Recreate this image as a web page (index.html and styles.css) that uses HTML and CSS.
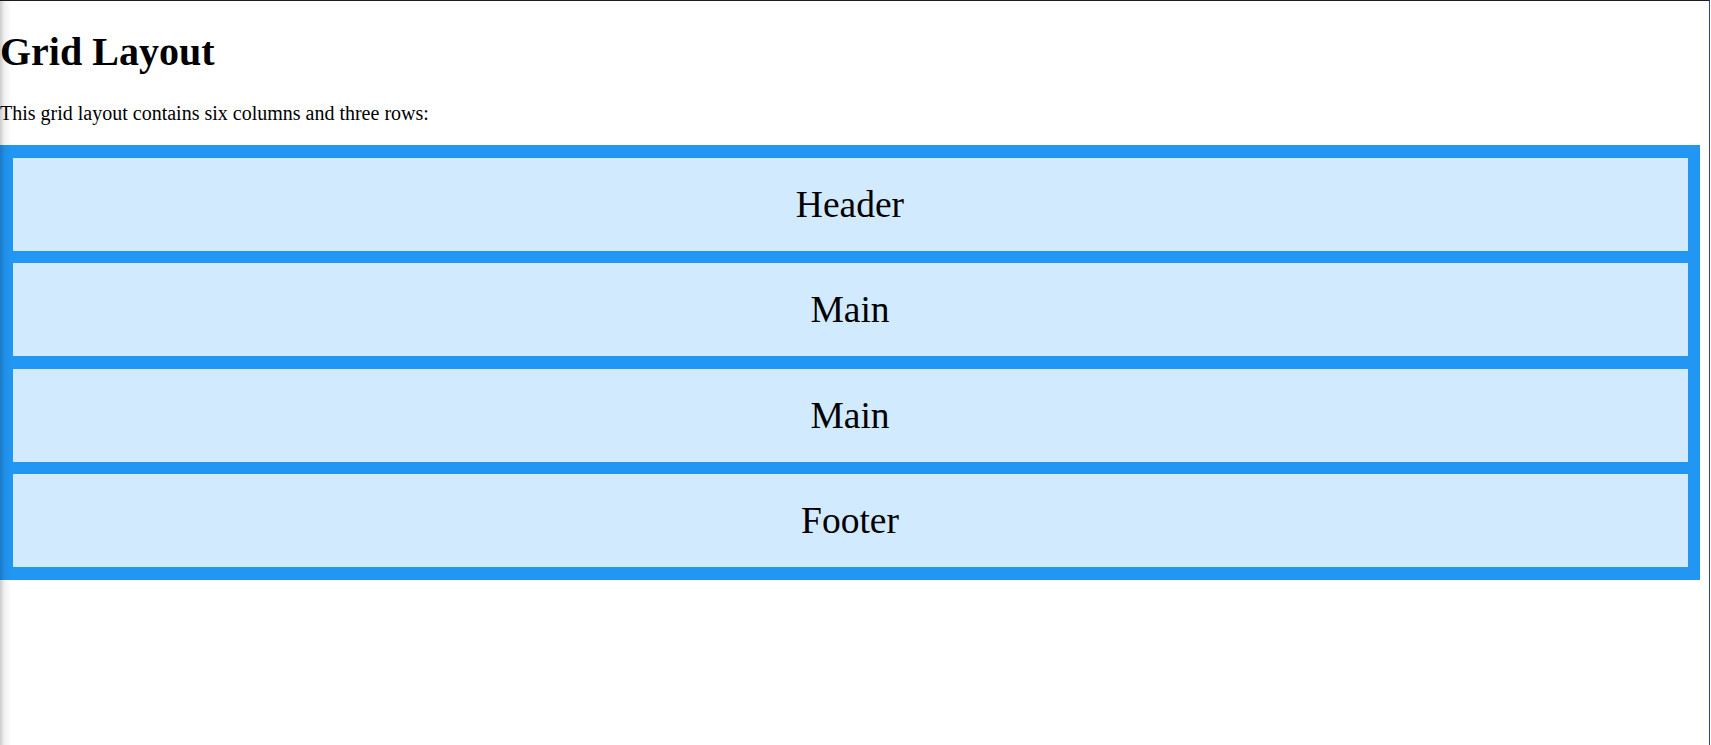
FILE: index.html
```html
<!DOCTYPE html>
<html lang="en">
<head>
<meta charset="utf-8">
<title>Grid Layout</title>
<link rel="stylesheet" href="styles.css">
</head>
<body>
<div class="frame">
  <h1 class="title">Grid Layout</h1>
  <p class="intro">This grid layout contains six columns and three rows:</p>
  <div class="grid-container">
    <div class="item item-header">Header</div>
    <div class="item item-main">Main</div>
    <div class="item item-main">Main</div>
    <div class="item item-footer">Footer</div>
  </div>
</div>
<div class="edge-shadow"></div>
</body>
</html>
```
FILE: styles.css
```css
html, body {
  margin: 0;
  padding: 0;
  background: #ffffff;
}
body {
  font-family: "Liberation Serif", "Times New Roman", serif;
  font-size: 20px;
  color: #000;
  height: 745px;
  overflow: hidden;
  position: relative;
}
.frame {
  width: 1709px;
  height: 744px;
  border-top: 1px solid #1c1c1c;
  border-right: 1px solid #2b4c8c;
  display: flow-root;
}
.title {
  font-size: 40px;
  font-weight: bold;
  margin: 27px 0 27px 0;
}
.intro {
  margin: 20px 0 20px 0;
}
.grid-container {
  width: 1700px;
  box-sizing: border-box;
  display: grid;
  grid-template-columns: 1fr;
  gap: 12.5px;
  padding: 12.5px;
  background-color: #2196F3;
}
.item {
  background-color: rgba(255, 255, 255, 0.8);
  text-align: center;
  padding: 25px 0;
  font-size: 37.5px;
  line-height: 43px;
}
.edge-shadow {
  position: absolute;
  left: 0;
  top: 0;
  width: 11px;
  height: 745px;
  background: linear-gradient(to right, rgba(0,0,0,0.2), rgba(0,0,0,0.06) 40%, rgba(0,0,0,0));
  pointer-events: none;
}
```
